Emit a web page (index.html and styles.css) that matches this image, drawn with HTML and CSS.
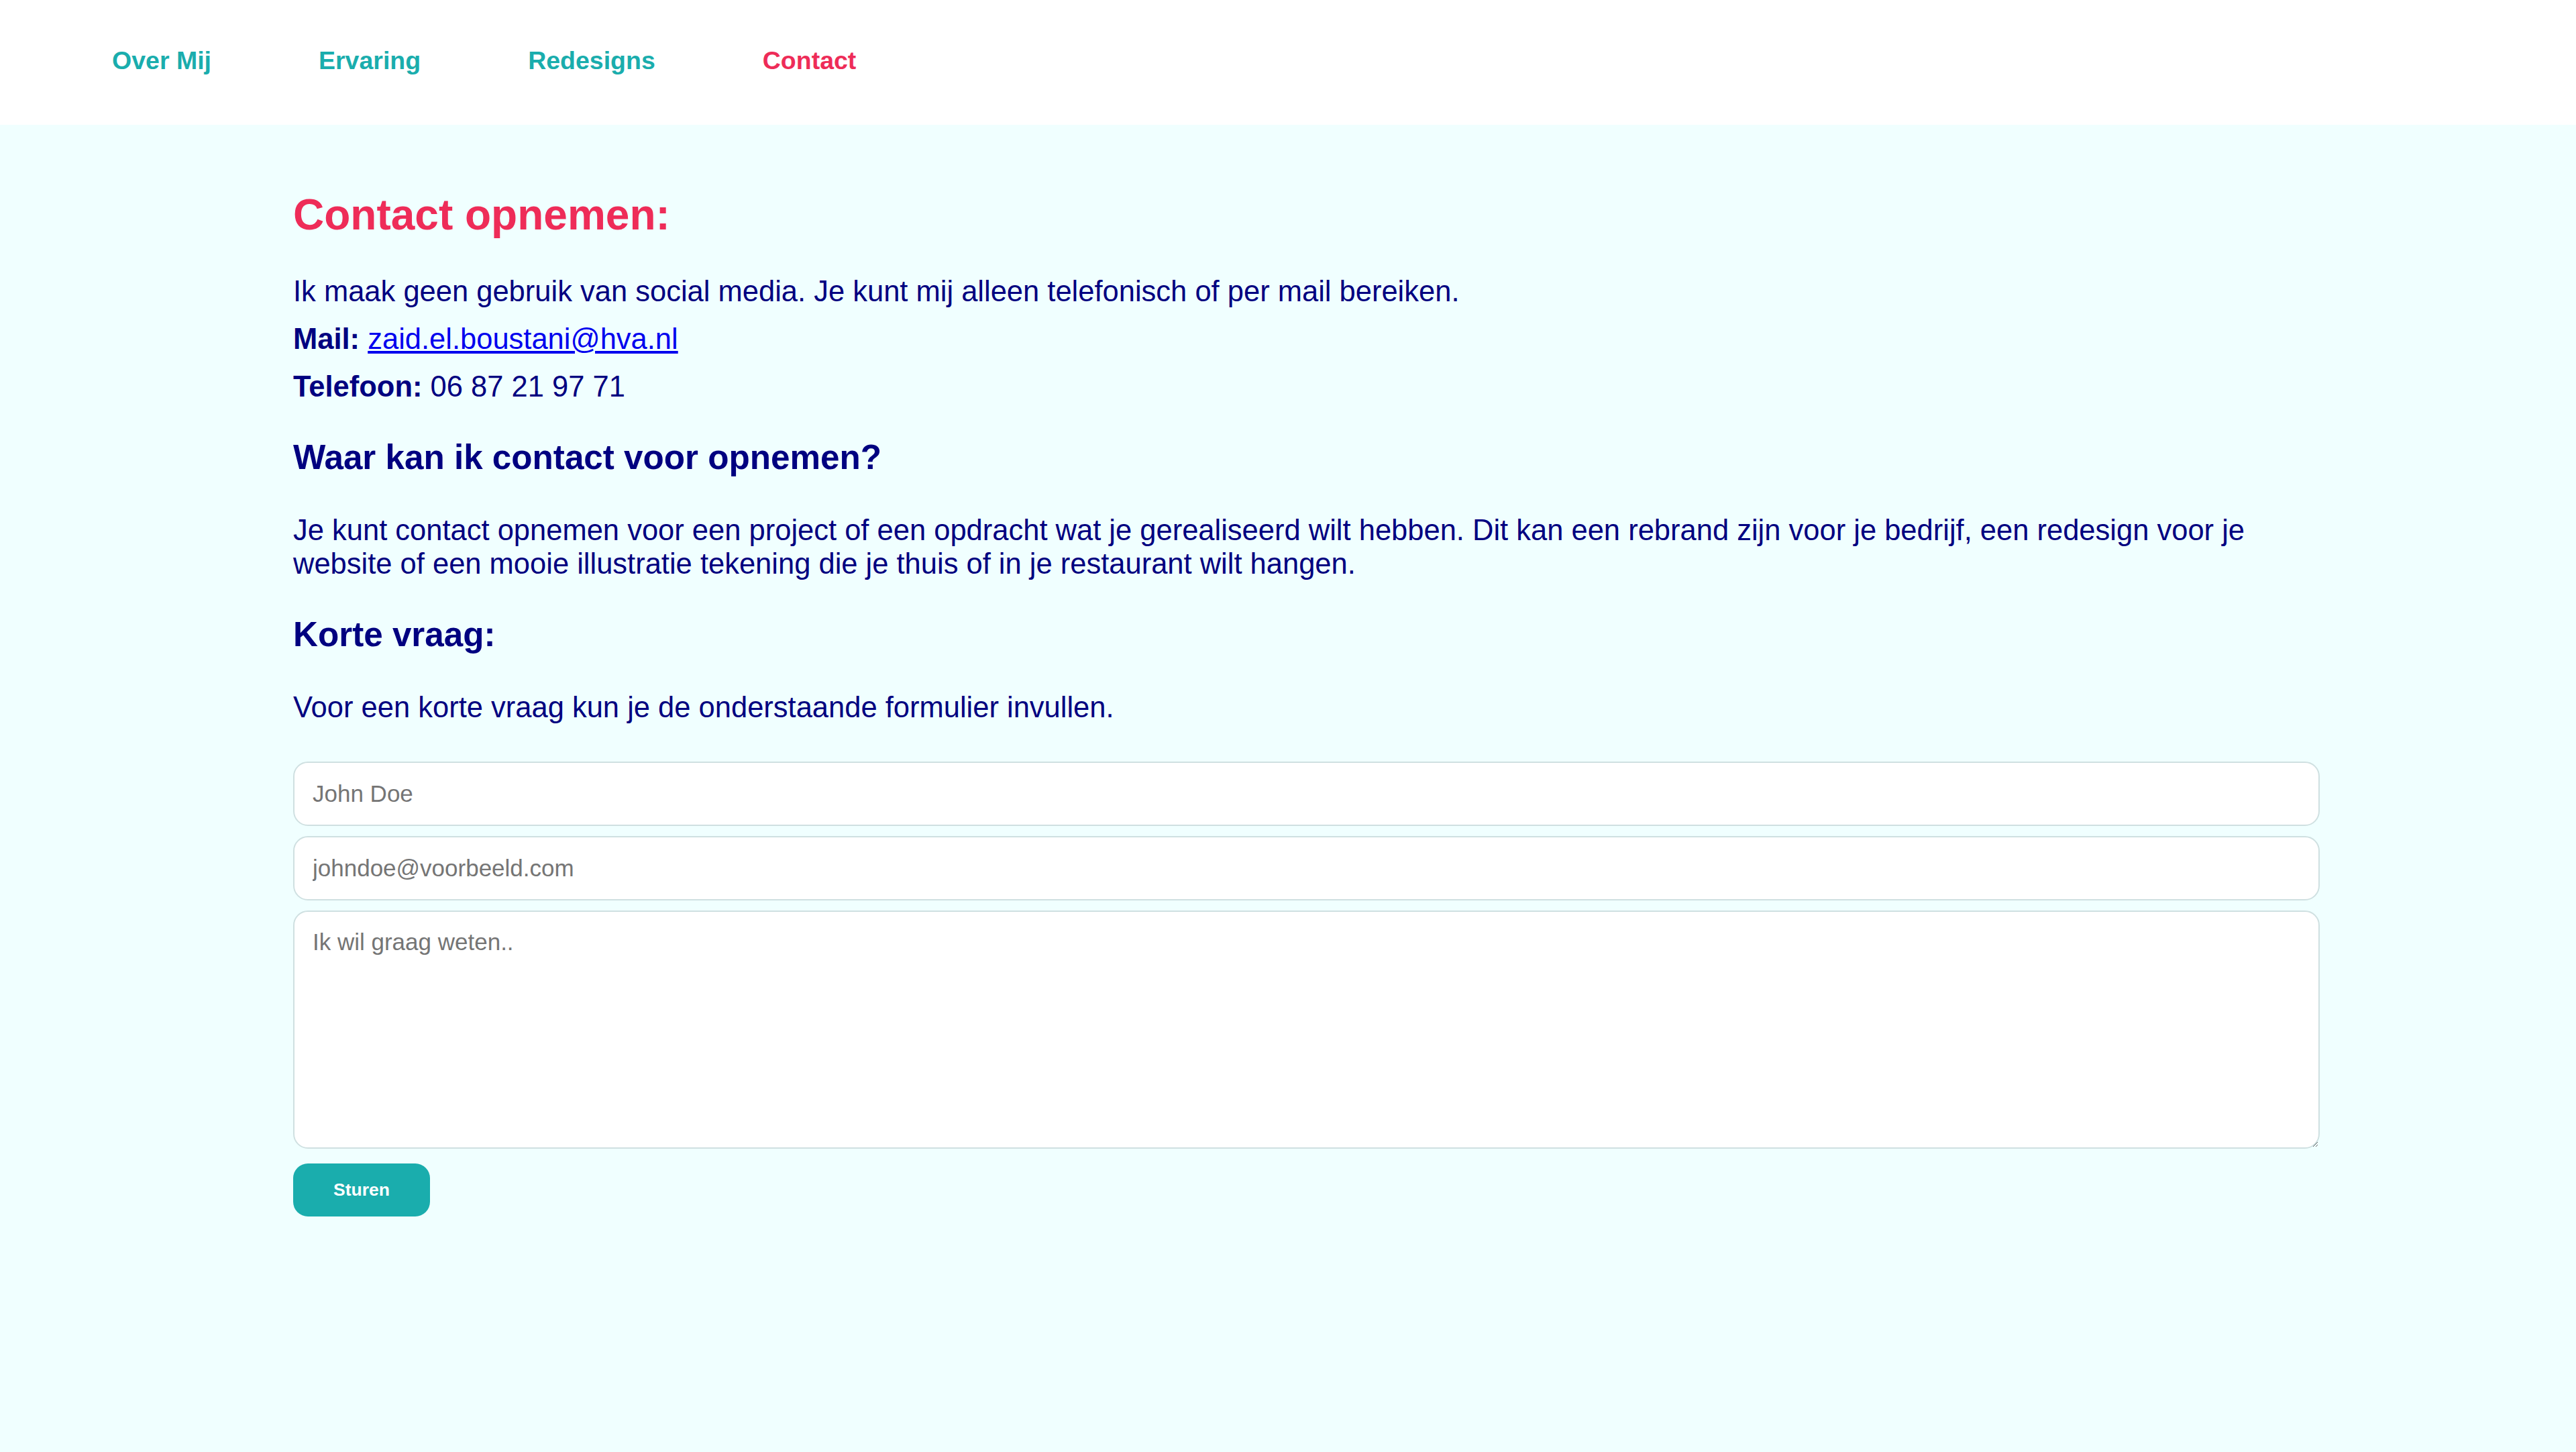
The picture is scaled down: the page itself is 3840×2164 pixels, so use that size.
FILE: index.html
```html
<!DOCTYPE html>
<html lang="nl">
<head>
<meta charset="utf-8">
<title>Contact</title>
<link rel="stylesheet" href="styles.css">
</head>
<body>
<nav class="topnav">
  <a class="navlink" href="#">Over Mij</a>
  <a class="navlink" href="#">Ervaring</a>
  <a class="navlink" href="#">Redesigns</a>
  <a class="navlink active" href="#">Contact</a>
</nav>
<main class="content">
  <h1 class="title">Contact opnemen:</h1>
  <p class="text tight">Ik maak geen gebruik van social media. Je kunt mij alleen telefonisch of per mail bereiken.</p>
  <p class="text tight"><strong>Mail:</strong> <a class="mail" href="#">zaid.el.boustani@hva.nl</a></p>
  <p class="text"><strong>Telefoon:</strong> 06 87 21 97 71</p>
  <h2 class="subtitle">Waar kan ik contact voor opnemen?</h2>
  <p class="text">Je kunt contact opnemen voor een project of een opdracht wat je gerealiseerd wilt hebben. Dit kan een rebrand zijn voor je bedrijf, een redesign voor je website of een mooie illustratie tekening die je thuis of in je restaurant wilt hangen.</p>
  <h2 class="subtitle">Korte vraag:</h2>
  <p class="text">Voor een korte vraag kun je de onderstaande formulier invullen.</p>
  <form class="form">
    <input class="field" type="text" placeholder="John Doe">
    <input class="field" type="email" placeholder="johndoe@voorbeeld.com">
    <textarea class="field area" placeholder="Ik wil graag weten.."></textarea>
    <button class="send" type="button">Sturen</button>
  </form>
</main>
</body>
</html>
```
FILE: styles.css
```css
html {
  background: #f0ffff;
}
body {
  margin: 0;
  font-family: "Liberation Sans", Arial, sans-serif;
  color: #000080;
  min-height: 2164px;
  background: #f0ffff;
}
.topnav {
  height: 186px;
  background: #ffffff;
  display: flex;
  align-items: center;
  gap: 160px;
  padding-left: 167px;
  padding-bottom: 6px;
  box-sizing: border-box;
}
.navlink {
  font-size: 37.5px;
  font-weight: bold;
  color: #1aadad;
  text-decoration: none;
  line-height: 44px;
}
.navlink.active {
  color: #ee2c58;
}
.content {
  margin-left: 437px;
  width: 3021px;
  padding-top: 97px;
}
.title {
  margin: 0 0 52px;
  font-size: 64px;
  line-height: 74px;
  color: #ee2c58;
  font-weight: bold;
}
.text {
  margin: 0 0 52px;
  font-size: 43.5px;
  line-height: 50px;
}
.text.tight {
  margin-bottom: 21px;
}
.mail {
  color: #0000ee;
  text-decoration: underline;
}
.subtitle {
  margin: 0 0 54px;
  font-size: 51.2px;
  line-height: 58px;
  font-weight: bold;
}
.form {
  display: flex;
  flex-direction: column;
  align-items: flex-start;
  gap: 15px;
  margin-top: 56px;
}
.field {
  box-sizing: border-box;
  width: 100%;
  height: 96px;
  border: 2px solid #cfe0e1;
  border-radius: 22px;
  background: #ffffff;
  padding: 0 27px;
  font-family: "Liberation Sans", Arial, sans-serif;
  font-size: 35px;
  color: #333;
  outline: none;
}
.field::placeholder {
  color: #757575;
}
.area {
  height: 355px;
  padding: 25px 27px;
  resize: vertical;
  line-height: 40px;
}
.send {
  margin-top: 7px;
  width: 204px;
  height: 79px;
  border: none;
  border-radius: 22px;
  background: #1aadad;
  color: #ffffff;
  font-family: "Liberation Sans", Arial, sans-serif;
  font-size: 26.5px;
  font-weight: bold;
  cursor: pointer;
}
```
